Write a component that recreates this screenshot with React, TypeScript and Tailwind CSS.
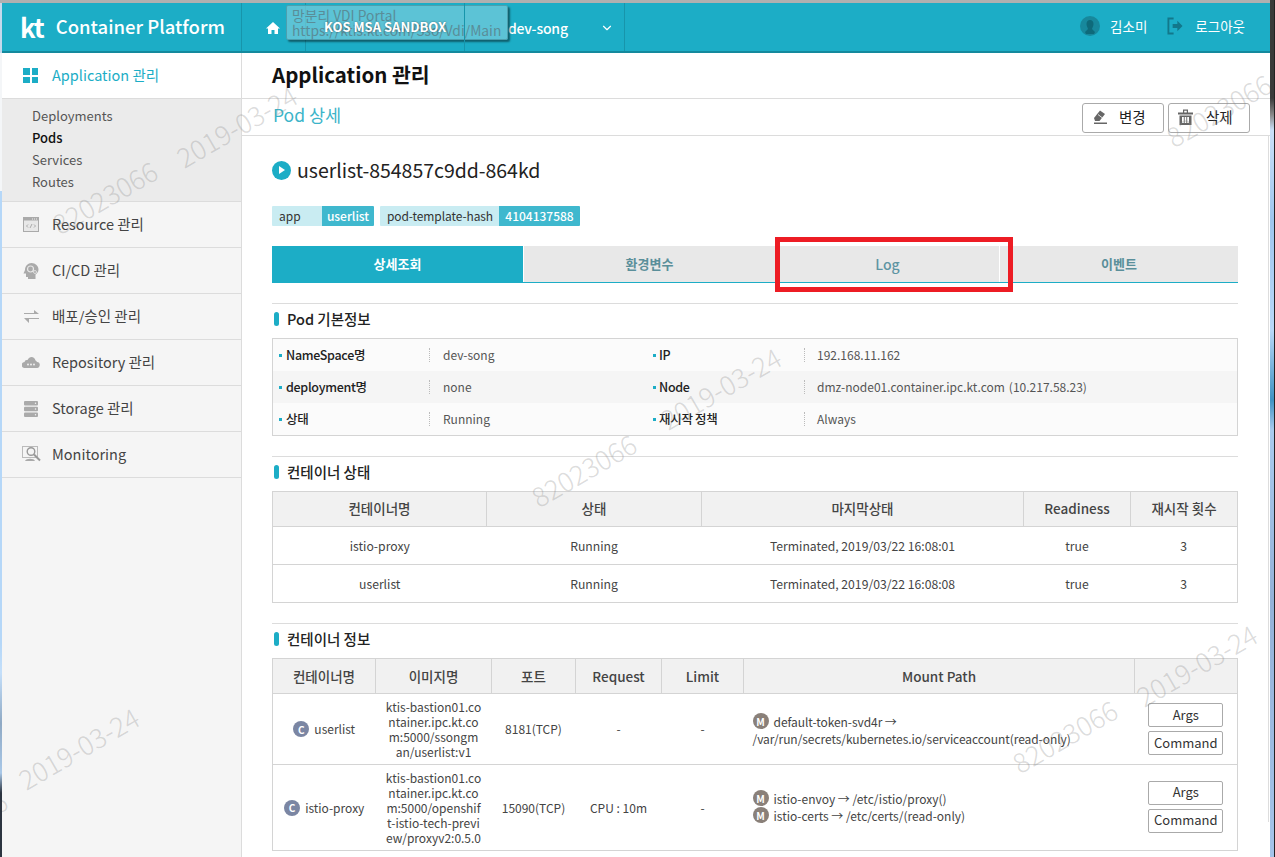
import { ChevronDown } from 'lucide-react'

const font = { fontFamily: '"Noto Sans CJK KR", "Noto Sans", sans-serif' }

const sideItems = [
  { label: 'Resource 관리', icon: 'resource' },
  { label: 'CI/CD 관리', icon: 'cicd' },
  { label: '배포/승인 관리', icon: 'deploy' },
  { label: 'Repository 관리', icon: 'repo' },
  { label: 'Storage 관리', icon: 'storage' },
  { label: 'Monitoring', icon: 'monitor' },
]

const subItems = ['Deployments', 'Pods', 'Services', 'Routes']

const watermarks = [
  { text: '82023066', cls: 'left-[47px] top-[177px]' },
  { text: '2019-03-24', cls: 'left-[170px] top-[106px]' },
  { text: '82023066', cls: 'left-[526px] top-[450px]' },
  { text: '2019-03-24', cls: 'left-[654px] top-[368px]' },
  { text: '82023066', cls: 'left-[1161px] top-[90px]' },
  { text: '82023066', cls: 'left-[1007px] top-[716px]' },
  { text: '2019-03-24', cls: 'left-[1130px] top-[645px]' },
  { text: '2019-03-24', cls: 'left-[12px] top-[728px]' },
  { text: '82023066', cls: 'left-[-103px] top-[807px]' },
]

function SideIcon({ name }: { name: string }) {
  if (name === 'resource') {
    return (
      <svg width="16" height="15" viewBox="0 0 16 15">
        <rect x="0.5" y="0.5" width="15" height="14" fill="#e8e8e8" stroke="#aaa" />
        <rect x="0.5" y="0.5" width="15" height="3" fill="#aaa" />
        <path d="M9 2h1M11 2h1M13 2h1" stroke="#eee" strokeWidth="1" />
        <path d="M5 7.500 3.500 9 5 10.500M11 7.500l1.500 1.500L11 10.500M9 7 7 11" fill="none" stroke="#999" strokeWidth="0.8" />
      </svg>
    )
  }
  if (name === 'cicd') {
    return (
      <svg width="18" height="18" viewBox="0 0 18 18">
        <path d="M9.500 1c4 0 7 3 7 6.500 0 2.500-1.500 4-3 5V17H6v-2H4v-3.500H1.500L3 8c0-4 3-7 6.500-7z" fill="#aaa" />
        <circle cx="8.500" cy="7" r="3" fill="none" stroke="#e8e8e8" strokeWidth="1.200" />
        <circle cx="13" cy="10" r="1.500" fill="none" stroke="#e8e8e8" strokeWidth="0.8" />
      </svg>
    )
  }
  if (name === 'deploy') {
    return (
      <svg width="15" height="13" viewBox="0 0 15 13">
        <path d="M0 3h10V0l5 4H0zM15 9H5V13L0 8h15z" fill="#aaa" />
      </svg>
    )
  }
  if (name === 'repo') {
    return (
      <svg width="18" height="11" viewBox="0 0 18 11">
        <path d="M4 11H3a3 3 0 0 1-.500-6 2.500 2.500 0 0 1 3-2C6.500 1 8 0 9.500 0c2 0 3.500 1.500 4 3.500 .500 0 1 .500 1.500 1.500a3 3 0 0 1-.500 6z" fill="#aaa" />
        <circle cx="6" cy="7.500" r="0.900" fill="#f5f5f5" />
        <circle cx="9" cy="7.500" r="0.900" fill="#f5f5f5" />
        <circle cx="12" cy="7.500" r="0.900" fill="#f5f5f5" />
      </svg>
    )
  }
  if (name === 'storage') {
    return (
      <svg width="14" height="16" viewBox="0 0 14 16">
        <rect x="0" y="0" width="14" height="4.500" rx="1" fill="#aaa" />
        <rect x="0" y="5.700" width="14" height="4.500" rx="1" fill="#aaa" />
        <rect x="0" y="11.400" width="14" height="4.500" rx="1" fill="#aaa" />
        <circle cx="11.500" cy="2.200" r="0.700" fill="#f5f5f5" />
        <circle cx="11.500" cy="8" r="0.700" fill="#f5f5f5" />
        <circle cx="11.500" cy="13.700" r="0.700" fill="#f5f5f5" />
      </svg>
    )
  }
  return (
    <svg width="19" height="17" viewBox="0 0 19 17">
      <rect x="0.500" y="0.500" width="15" height="11" fill="none" stroke="#bbb" />
      <circle cx="9" cy="5.500" r="3.800" fill="#f5f5f5" stroke="#999" strokeWidth="1.400" />
      <path d="M12 8.500l6 6" stroke="#999" strokeWidth="2" />
      <path d="M3 15c1-3 9-3 10 0z" fill="#aaa" />
    </svg>
  )
}

function SectionTitle({ children }: { children: string }) {
  return (
    <div className="border-t border-[#dcdcdc] h-[35px] pb-[4px] pl-[2px] flex items-center gap-[8px]">
      <span className="w-[5px] h-[14px] rounded-full bg-[#1cadc6]" />
      <span className="text-[14.500px] font-medium text-[#222]">{children}</span>
    </div>
  )
}

function InfoRow({ k1, v1, k2, v2, shaded }: { k1: string; v1: string; k2: string; v2: React.ReactNode; shaded?: boolean }) {
  return (
    <div className={`flex h-[32px] items-center text-[12px] ${shaded ? 'bg-[#f5f5f5]' : 'bg-[#fbfbfb]'}`}>
      <div className="w-[156px] pl-[6px] flex items-center gap-[4px] font-medium text-[#222] text-[12.500px] tracking-[-0.3px]">
        <span className="w-[3px] h-[3px] bg-[#1cadc6]" />
        {k1}
      </div>
      <div className="w-[224px] pl-[13px] border-l border-dotted border-[#bbb] h-[14px] flex items-center text-[#555]">{v1}</div>
      <div className="w-[151px] flex items-center gap-[3px] font-medium text-[#222] text-[12.500px] tracking-[-0.3px]">
        <span className="w-[3px] h-[3px] bg-[#1cadc6]" />
        {k2}
      </div>
      <div className="flex-1 pl-[12px] border-l border-dotted border-[#bbb] h-[14px] flex items-center text-[#555]">{v2}</div>
    </div>
  )
}

function Circle({ letter, color }: { letter: string; color: string }) {
  return (
    <span className={`inline-flex w-[16px] h-[16px] rounded-full items-center justify-center text-white text-[10px] font-bold shrink-0 ${color}`}>
      {letter}
    </span>
  )
}

function SmallBtn({ children }: { children: string }) {
  return (
    <button className="w-[75px] h-[24px] pb-[1px] border border-[#aaa] rounded-[2px] bg-white text-[13px] text-[#333] flex items-center justify-center">
      {children}
    </button>
  )
}

export default function App() {
  return (
    <div style={font} className="relative w-[1275px] h-[857px] overflow-hidden bg-white">
      {/* top bar */}
      <header className="flex h-[53px] border-t-[3px] border-t-[#b0b0b0] border-b-2 border-b-[#14899d] bg-[#1cadc6] text-white">
        <div className="w-[242px] flex items-center pl-[20px] gap-[12px] border-r border-[#1795ab]">
          <span className="text-[26px] font-bold tracking-[-1px] leading-none">kt</span>
          <span className="text-[18.500px] font-medium">Container Platform</span>
        </div>
        <div className="w-[64px] flex items-center justify-center border-r border-[#1795ab] pr-[1px] pt-[1px]">
          <svg width="14" height="12" viewBox="0 0 14 12">
            <path d="M7 0 0 6.500h2V12h3.500V8h3v4H12V6.500h2z" fill="white" />
          </svg>
        </div>
        <div className="relative z-10 w-[159px] flex items-center justify-center border-r border-[#1795ab] text-[13px] font-bold text-white [text-shadow:0_0_2px_rgba(0,0,0,0.5)]">
          KOS MSA SANDBOX
        </div>
        <div className="w-[160px] flex items-center justify-between pl-[43px] pr-[10px] pt-[2px] border-r border-[#1795ab] text-[14px] font-medium tracking-[-0.2px]">
          dev-song
          <ChevronDown size={14} />
        </div>
        <div className="flex-1 flex items-center justify-end pr-[30px] pb-[2px] text-[13.500px] text-white">
          <svg width="20" height="20" viewBox="0 0 20 20" className="mr-[10px]">
            <circle cx="10" cy="10" r="10" fill="#17889c" />
            <path d="M10 4c2 0 3.500 1.500 3.500 4S12 12 12 13l3 3-1 2H6l-1-2 3-3c0-1-1.500-2.500-1.500-5S8 4 10 4z" fill="#0e6a7a" />
          </svg>
          <span className="mr-[20px]">김소미</span>
          <svg width="16" height="18" viewBox="0 0 17 18" className="mr-[12px]">
            <path d="M7 1H1.500v16H7" fill="none" stroke="#12788b" strokeWidth="2" />
            <path d="M6 7h5V3.500L16.500 9 11 14.500V11H6z" fill="#12788b" />
          </svg>
          <span>로그아웃</span>
        </div>
      </header>

      <div className="flex h-[804px]">
        {/* sidebar */}
        <aside className="w-[242px] shrink-0 bg-[#f5f5f5] border-r border-[#dcdcdc] pl-[2px]">
          <div className="h-[46px] bg-white border-b border-[#dcdcdc] flex items-center pl-[21px] pb-[2px] gap-[14px] text-[#1cadc6] text-[14.500px]">
            <span className="grid grid-cols-2 gap-[2px] w-[15px] h-[15px] mt-[2px]">
              <span className="bg-[#1cadc6]" />
              <span className="bg-[#1cadc6]" />
              <span className="bg-[#1cadc6]" />
              <span className="bg-[#1cadc6]" />
            </span>
            Application 관리
          </div>
          <div className="bg-[#ebebeb] h-[103px] pt-[6px] pl-[30px] border-b border-[#dcdcdc]">
            {subItems.map((s) => (
              <div key={s} className={`h-[22px] flex items-center text-[13px] ${s === 'Pods' ? 'text-[#111] font-medium' : 'text-[#555]'}`}>
                {s}
              </div>
            ))}
          </div>
          {sideItems.map((item) => (
            <div key={item.label} className="h-[46px] border-b border-[#dcdcdc] flex items-center text-[14.500px] text-[#444]">
              <span className="w-[50px] flex justify-center pl-[8px]">
                <SideIcon name={item.icon} />
              </span>
              <span className="pb-[2px]">{item.label}</span>
            </div>
          ))}
        </aside>

        {/* main */}
        <main className="flex-1 min-w-0">
          <div className="h-[46px] pl-[30px] pb-[2px] flex items-center border-b border-[#dcdcdc] text-[20.500px] font-bold text-[#111]">
            Application 관리
          </div>
          <div className="h-[37px] pl-[31px] pr-[25px] flex items-center justify-between border-b border-[#dcdcdc]">
            <span className="text-[17.500px] text-[#3cb4c9] pb-[4px]">Pod 상세</span>
            <div className="flex gap-[4px] pt-[1px]">
              <button className="w-[82px] h-[30px] border border-[#aaa] rounded-[3px] flex items-center pl-[10px] pb-[1px] gap-[11px] text-[14.500px] text-[#222]">
                <svg width="15" height="14" viewBox="0 0 15 14">
                  <path d="M1 8 7 0.500l5 3.500-5.500 7H2z" fill="#666" />
                  <path d="M5 4.500 9.500 8" stroke="#fff" strokeWidth="0.800" />
                  <rect x="1" y="12.500" width="13" height="1.500" fill="#666" />
                </svg>
                변경
              </button>
              <button className="w-[82px] h-[30px] border border-[#aaa] rounded-[3px] flex items-center pl-[9px] pb-[1px] gap-[13px] text-[14.500px] text-[#222]">
                <svg width="15" height="16" viewBox="0 0 15 16">
                  <path d="M0 3.500h15V5.500H0zM5 3.500V0.500h5v3H8.800V1.700H6.200V3.500zM1.500 6.500h12V16h-12zM4 8v6h1.800V8zm2.700 0v6h1.600V8zM9.200 8v6H11V8z" fill="#666" fillRule="evenodd" />
                </svg>
                삭제
              </button>
            </div>
          </div>

          <div className="pl-[30px] pr-[37px]">
            <div className="flex items-center gap-[6px] h-[34px] mt-[17px] text-[19.500px] text-[#222]">
              <span className="w-[19px] h-[19px] rounded-full bg-[#1cadc6] flex items-center justify-center">
                <span className="border-l-[6px] border-l-white border-y-[4px] border-y-transparent ml-[1px]" />
              </span>
              <span className="pb-[1px] tracking-[-0.03px]">userlist-854857c9dd-864kd</span>
            </div>

            <div className="flex gap-[6px] mt-[19px] text-[12px] h-[20px]">
              <div className="flex rounded-[1px] overflow-hidden">
                <span className="w-[50px] pl-[7px] pb-[1px] bg-[#c9ecf2] text-[#333] flex items-center">app</span>
                <span className="w-[52px] pb-[1px] bg-[#3fb8ce] text-white flex items-center justify-center font-medium">userlist</span>
              </div>
              <div className="flex rounded-[1px] overflow-hidden">
                <span className="w-[119px] pl-[7px] pb-[1px] bg-[#c9ecf2] text-[#333] flex items-center tracking-[-0.1px]">pod-template-hash</span>
                <span className="w-[81px] pb-[1px] bg-[#3fb8ce] text-white flex items-center justify-center font-medium">4104137588</span>
              </div>
            </div>

            <div className="flex mt-[20px] h-[37px] border-b border-[#1cadc6] text-[13px] font-bold">
              <div className="w-[251px] bg-[#1cadc6] text-white flex items-center justify-center">상세조회</div>
              <div className="w-[251px] ml-px bg-[#e8e8e8] text-[#5a8f9a] flex items-center justify-center">환경변수</div>
              <div className="w-[223px] ml-px bg-[#e8e8e8] text-[#5e95a3] flex items-center justify-center text-[14px] font-medium">Log</div>
              <div className="flex-1 ml-px bg-[#e8e8e8] text-[#5a8f9a] flex items-center justify-center">이벤트</div>
            </div>

            <div className="mt-[20px]">
              <SectionTitle>Pod 기본정보</SectionTitle>
              <div className="border border-[#d4d4d4]">
                <InfoRow k1="NameSpace명" v1="dev-song" k2="IP" v2="192.168.11.162" />
                <InfoRow
                  k1="deployment명"
                  v1="none"
                  k2="Node"
                  v2={<>dmz-node01.container.ipc.kt.com<span className="ml-[4px]">(10.217.58.23)</span></>}
                  shaded
                />
                <InfoRow k1="상태" v1="Running" k2="재시작 정책" v2="Always" />
              </div>
            </div>

            <div className="mt-[20px]">
              <SectionTitle>컨테이너 상태</SectionTitle>
              <table className="w-full table-fixed border-collapse border border-[#d4d4d4] text-[12.200px] text-[#444] text-center">
                <colgroup>
                  <col className="w-[214px]" />
                  <col className="w-[215px]" />
                  <col className="w-[322px]" />
                  <col className="w-[107px]" />
                  <col />
                </colgroup>
                <thead>
                  <tr className="h-[35px] bg-[#f1f1f1] text-[13.500px]">
                    {['컨테이너명', '상태', '마지막상태', 'Readiness', '재시작 횟수'].map((h) => (
                      <th key={h} className="border border-[#d4d4d4] font-medium pb-[1px]">{h}</th>
                    ))}
                  </tr>
                </thead>
                <tbody>
                  {[
                    ['istio-proxy', 'Running', 'Terminated, 2019/03/22 16:08:01', 'true', '3'],
                    ['userlist', 'Running', 'Terminated, 2019/03/22 16:08:08', 'true', '3'],
                  ].map((r) => (
                    <tr key={r[0]} className="h-[38px] border-t border-[#d4d4d4]">
                      {r.map((c, i) => (
                        <td key={i} className="pt-[1px]">{c}</td>
                      ))}
                    </tr>
                  ))}
                </tbody>
              </table>
            </div>

            <div className="mt-[20px]">
              <SectionTitle>컨테이너 정보</SectionTitle>
              <table className="w-full table-fixed border-collapse border border-[#d4d4d4] text-[12px] text-[#444] text-center">
                <colgroup>
                  <col className="w-[103px]" />
                  <col className="w-[116px]" />
                  <col className="w-[84px]" />
                  <col className="w-[86px]" />
                  <col className="w-[82px]" />
                  <col className="w-[391px]" />
                  <col />
                </colgroup>
                <thead>
                  <tr className="h-[35px] bg-[#f1f1f1] text-[13.500px]">
                    {['컨테이너명', '이미지명', '포트', 'Request', 'Limit', 'Mount Path', ''].map((h, i) => (
                      <th key={i} className="border border-[#d4d4d4] font-medium">{h}</th>
                    ))}
                  </tr>
                </thead>
                <tbody>
                  <tr className="h-[71px] border-t border-[#d4d4d4]">
                    <td>
                      <span className="inline-flex items-center gap-[5px]"><Circle letter="C" color="bg-[#7b86a3]" />userlist</span>
                    </td>
                    <td className="leading-[15px] whitespace-nowrap">
                      ktis-bastion01.co<br />ntainer.ipc.kt.co<br />m:5000/ssongm<br />an/userlist:v1
                    </td>
                    <td>8181(TCP)</td>
                    <td>-</td>
                    <td>-</td>
                    <td className="text-left pl-[9px] leading-[17px] tracking-[-0.06px]">
                      <span className="inline-flex items-center gap-[5px]"><Circle letter="M" color="bg-[#8a8079]" />default-token-svd4r →</span>
                      <br />
                      /var/run/secrets/kubernetes.io/serviceaccount(read-only)
                    </td>
                    <td>
                      <div className="flex flex-col items-center gap-[4px]">
                        <SmallBtn>Args</SmallBtn>
                        <SmallBtn>Command</SmallBtn>
                      </div>
                    </td>
                  </tr>
                  <tr className="h-[86px] border-t border-[#d4d4d4]">
                    <td>
                      <span className="inline-flex items-center gap-[5px]"><Circle letter="C" color="bg-[#7b86a3]" />istio-proxy</span>
                    </td>
                    <td className="leading-[15px] whitespace-nowrap">
                      ktis-bastion01.co<br />ntainer.ipc.kt.co<br />m:5000/openshif<br />t-istio-tech-previ<br />ew/proxyv2:0.5.0
                    </td>
                    <td>15090(TCP)</td>
                    <td>CPU : 10m</td>
                    <td>-</td>
                    <td className="text-left pl-[9px] pb-[2px] leading-[17px]">
                      <span className="flex items-center gap-[5px]"><Circle letter="M" color="bg-[#8a8079]" />istio-envoy → /etc/istio/proxy()</span>
                      <span className="flex items-center gap-[5px]"><Circle letter="M" color="bg-[#8a8079]" />istio-certs → /etc/certs/(read-only)</span>
                    </td>
                    <td className="pb-[2px]">
                      <div className="flex flex-col items-center gap-[4px]">
                        <SmallBtn>Args</SmallBtn>
                        <SmallBtn>Command</SmallBtn>
                      </div>
                    </td>
                  </tr>
                </tbody>
              </table>
            </div>
          </div>
        </main>
      </div>

      {/* remote desktop tooltip over the top bar */}
      <div className="absolute left-[286px] top-[5px] w-[222px] h-[35px] bg-[#7fd0de]/65 border border-[#4d9fae] rounded-[2px] shadow-[2px_2px_2px_rgba(0,0,0,0.45)] pl-[5px] pt-[2px] text-[13.800px] leading-[15px] text-[#5a8d98]">
        <div>망분리 VDI Portal</div>
        <div>https://ktis.kt.com/Sso/Vdi/Main</div>
      </div>

      {/* annotation */}
      <div className="absolute left-[775px] top-[237px] w-[238px] h-[55px] border-[5px] border-[#ed1c24]" />

      {/* watermark */}
      {watermarks.map((w, i) => (
        <span key={i} className={`absolute ${w.cls} text-[27px] font-light text-[#888]/30 -rotate-[30deg] pointer-events-none`}>
          {w.text}
        </span>
      ))}

      {/* window edges */}
      <div className="absolute left-0 top-[3px] bottom-0 w-[2px] bg-[linear-gradient(#c5d9ec_0,#c5d9ec_50px,#f4f6f8_50px,#f4f6f8_188px,#b5d7f8_188px,#b5d7f8_640px,#c4dffa_670px,#8fa9c4_720px,#a9c8e8_770px,#2c3440_790px)]" />
      <div className="absolute left-[1268px] top-[135px] h-[687px] w-px bg-[#ddd]" />
      <div className="absolute left-[1270px] top-0 bottom-0 w-[4px] bg-[linear-gradient(#3a3a3a_0,#3a3a3a_98px,#8a8a8a_115px,#c9e0f8_130px,#9fc6ee_220px,#b8d8f8_330px,#3f93c3_400px,#a9cbee_430px,#93b2d8_600px,#a5c4ea_857px)]" />
      <div className="absolute right-0 top-0 bottom-0 w-px bg-[#222]" />
    </div>
  )
}
